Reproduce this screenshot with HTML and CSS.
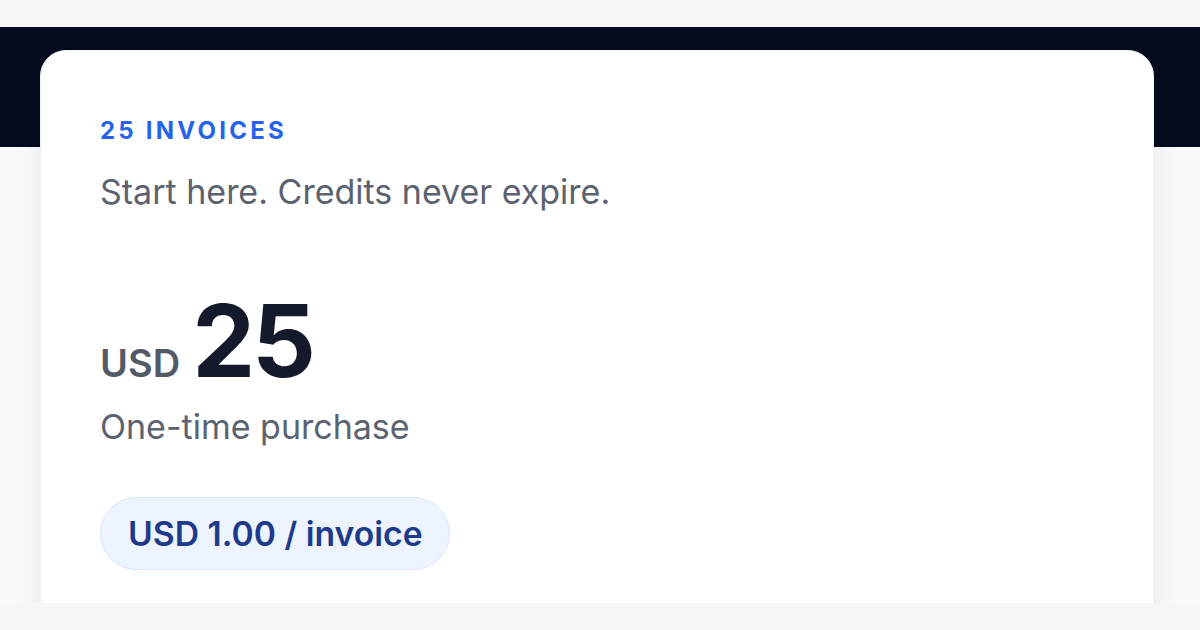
FILE: index.html
```html
<!DOCTYPE html>
<html>
<head>
<meta charset="utf-8">
<link rel="stylesheet" href="styles.css">
</head>
<body>
<div class="frame">
  <div class="card">
    <div class="label">25 INVOICES</div>
    <p class="desc">Start here. Credits never expire.</p>
    <div class="price">
      <span class="cur">USD</span>
      <span class="amount">25</span>
    </div>
    <p class="note">One-time purchase</p>
    <div class="pill">USD 1.00 / invoice</div>
  </div>
</div>
</body>
</html>
```

FILE: styles.css
```css
* { box-sizing: border-box; }
html, body { margin: 0; }
body {
  background: #f5f6f8;
  padding: 27px 0;
  font-family: Inter, "Noto Sans", sans-serif;
}
.frame {
  height: 576px;
  overflow: hidden;
  background: linear-gradient(#070b1e 0, #070b1e 120px, #f9fafb 120px);
  padding: 23px 46px 0 40px;
}
.card {
  background: #fff;
  border-radius: 26px;
  height: 620px;
  padding: 66px 60px 0 59px;
  box-shadow: 0 10px 30px rgba(15, 23, 42, 0.08);
  border: 1px solid #eef0f3;
}
.label {
  color: #2563eb;
  font-weight: 700;
  font-size: 24px;
  letter-spacing: 0.135em;
  line-height: 28px;
}
.desc {
  margin: 25px 0 0;
  color: #5b6270;
  font-size: 34px;
  line-height: 44px;
}
.price {
  margin-top: 77px;
  display: flex;
  align-items: baseline;
  gap: 12px;
  line-height: 1;
}
.cur {
  font-size: 38px;
  font-weight: 600;
  color: #535a67;
}
.amount {
  font-size: 100px;
  font-weight: 700;
  color: #141a2b;
  letter-spacing: -0.03em;
}
.note {
  margin: 14px 0 0;
  color: #5b6270;
  font-size: 34px;
  line-height: 44px;
}
.pill {
  display: inline-block;
  margin-top: 48px;
  background: #eef4ff;
  border: 1px solid #dbe5f7;
  border-radius: 999px;
  padding: 0 26px 0 27px;
  height: 73px;
  line-height: 71px;
  font-size: 33.7px;
  font-weight: 600;
  color: #1e3a8a;
}
```
